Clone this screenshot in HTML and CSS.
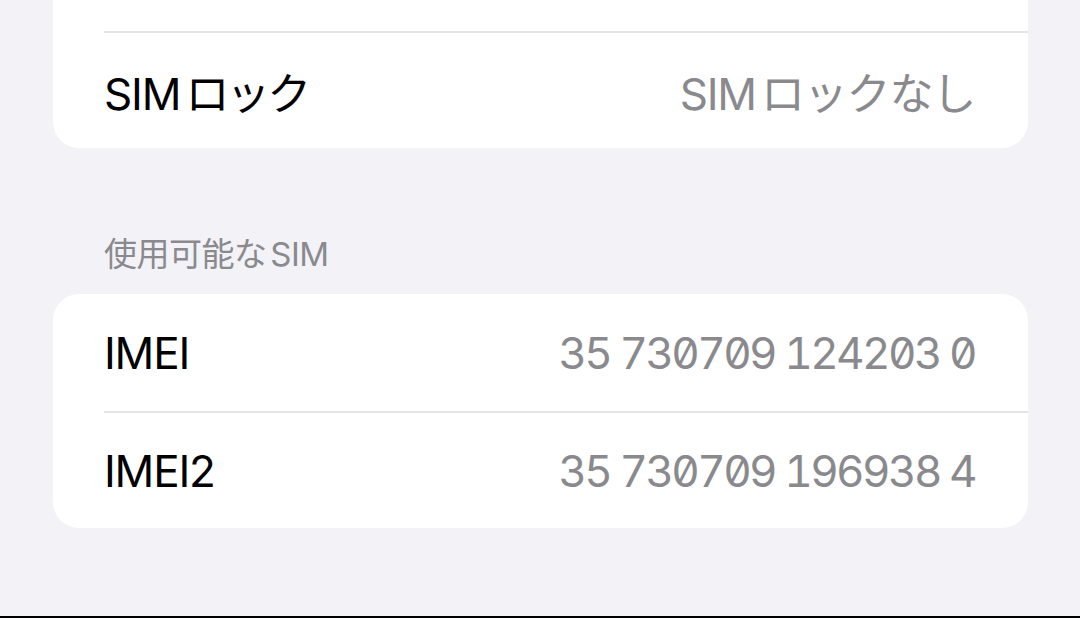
FILE: index.html
```html
<!DOCTYPE html>
<html lang="ja">
<head>
    <meta charset="UTF-8">
    <meta name="viewport" content="width=device-width, initial-scale=1.0">
    <title>情報</title>
    <link rel="stylesheet" href="styles.css">
</head>
<body>
    <div class="pagina">
        <!-- Bloco de cima: só a última linha aparece -->
        <div class="grupo grupo-topo">
            <div class="linha linha-cortada"></div>
            <div class="linha">
                <span class="rotulo">SIM <span class="kana">ロック</span></span>
                <span class="valor">SIM ロックなし</span>
            </div>
        </div>

        <h3 class="titulo-secao">使用可能な SIM</h3>

        <div class="grupo">
            <div class="linha">
                <span class="rotulo">IMEI</span>
                <span class="valor numero">35 730709 124203 0</span>
            </div>
            <div class="linha">
                <span class="rotulo">IMEI2</span>
                <span class="valor numero">35 730709 196938 4</span>
            </div>
        </div>
    </div>
</body>
</html>
```

FILE: styles.css
```css
* {
    margin: 0;
    padding: 0;
    box-sizing: border-box;
}

html {
    background-color: #000;
}

body {
    height: calc(100vh - 2px);
    background-color: #f2f2f7;
    font-family: Inter, "Noto Sans CJK JP", sans-serif;
    overflow: hidden;
}

.pagina {
    display: flex;
    flex-direction: column;
    padding: 0 52px 0 53px;
}

.grupo {
    background-color: #fff;
    border-radius: 26px;
    overflow: hidden;
}

.grupo-topo {
    border-radius: 0 0 26px 26px;
}

.linha {
    display: flex;
    justify-content: space-between;
    align-items: center;
    height: 117px;
    margin-left: 51px;
    padding-right: 53px;
    border-top: 2px solid #e4e4e8;
}

.linha:first-child {
    border-top: none;
}

/* linha de cima que fica para fora da tela */
.linha-cortada {
    height: 31px;
}

.rotulo {
    font-size: 44px;
    color: #000;
    letter-spacing: -1.2px;
    word-spacing: -6px;
}

.kana {
    letter-spacing: -3px;
}

.valor {
    font-size: 44px;
    color: #8a8a8e;
    letter-spacing: -1.2px;
    word-spacing: -6px;
}

.numero {
    font-feature-settings: "tnum", "zero";
    letter-spacing: -2.6px;
    word-spacing: 0;
}

.titulo-secao {
    font-weight: normal;
    font-size: 33px;
    color: #8a8a8e;
    margin: 86px 0 20px 51px;
    line-height: 40px;
    letter-spacing: -0.5px;
    word-spacing: -5px;
}
```
